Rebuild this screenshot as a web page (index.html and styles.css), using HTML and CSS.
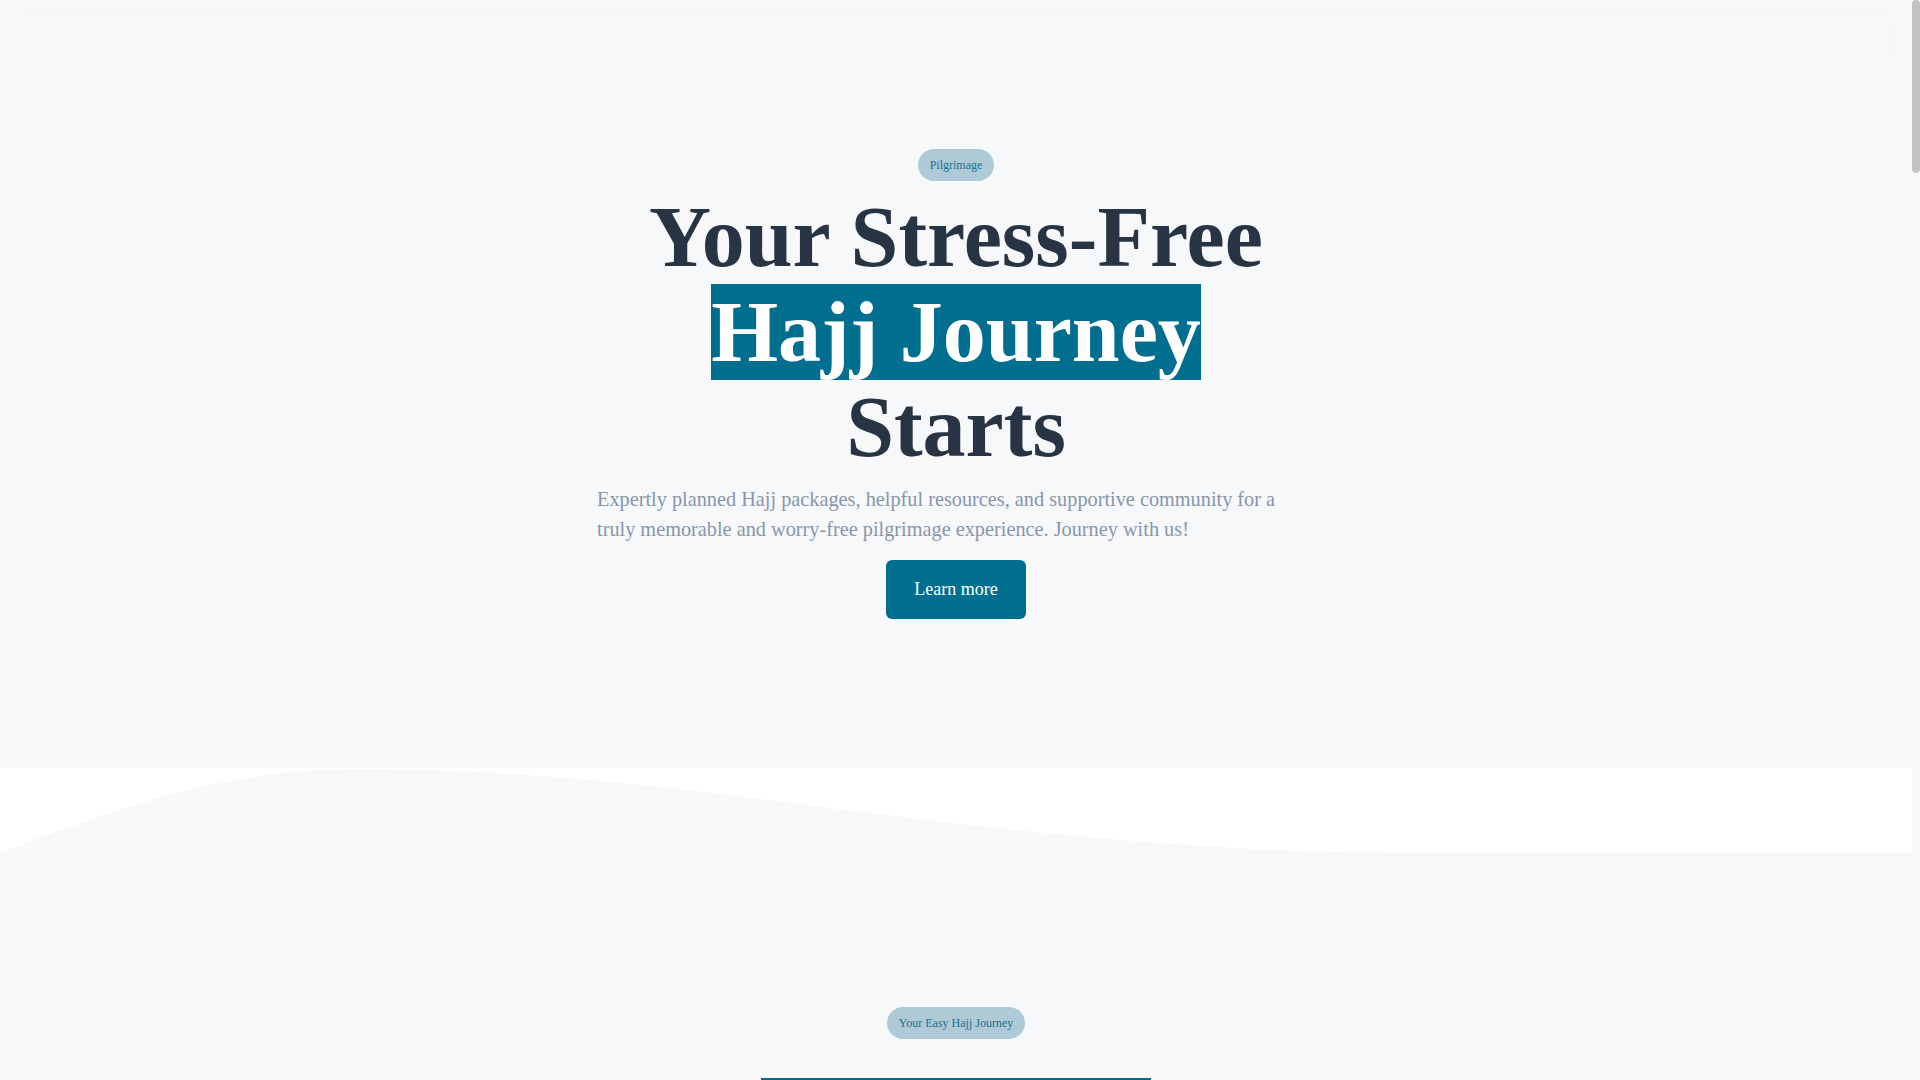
FILE: index.html
```html
<!DOCTYPE html>
<html lang="en">
<head>
<meta charset="utf-8">
<title>Hajj Journey</title>
<link rel="stylesheet" href="styles.css">
</head>
<body>
<div class="top">
  <header class="nav-wrap">
    <nav class="nav"></nav>
  </header>
  <section class="hero">
    <span class="badge">Pilgrimage</span>
    <h1 class="hero-title">Your Stress-Free<br><span class="hl">Hajj Journey</span><br>Starts</h1>
    <p class="hero-text">Expertly planned Hajj packages, helpful resources, and supportive community for a truly memorable and worry-free pilgrimage experience. Journey with us!</p>
    <a class="btn" href="#journey">Learn more</a>
  </section>
</div>
<div class="wave">
  <svg class="wave-svg" viewBox="0 0 1920 95" preserveAspectRatio="none" aria-hidden="true">
    <path d="M0,85 C110,43 220,1 360,1 C600,1 780,37 1020,62 C1190,79 1300,85 1420,85 L1920,85 L1920,95 L0,95 Z" fill="#f7f8fa"/>
  </svg>
</div>
<section class="journey" id="journey">
  <span class="badge">Your Easy Hajj Journey</span>
  <h2 class="section-title"><span class="hl hl-sm">Easy Steps to Hajj</span></h2>
</section>
<div class="scrollbar" aria-hidden="true"><div class="scrollbar-thumb"></div></div>
</body>
</html>
```

FILE: styles.css
```css
html, body {
  margin: 0;
  padding: 0;
}
html {
  background: #f7f8fa;
}
body {
  padding-right: 8px;
  font-family: "Liberation Serif", "Times New Roman", serif;
  color: #283343;
  background: #f7f8fa;
}

/* overlay scrollbar, as drawn by the browser in the reference */
.scrollbar {
  position: fixed;
  top: 0;
  right: 0;
  width: 8px;
  height: 100vh;
  background: #f8f9fa;
}
.scrollbar-thumb {
  height: 173px;
  border-radius: 4px;
  background: #c3c3c3;
}

.top {
  background: #f7f8fa;
}
.nav-wrap {
  padding: 15px 20px 0 18px;
}
.nav {
  height: 48px;
  border-radius: 4px;
  background: rgba(255, 255, 255, 0.12);
  box-shadow: 0 0 8px rgba(30, 40, 60, 0.015);
}

.hero {
  display: flex;
  flex-direction: column;
  align-items: center;
  padding: 86px 0 149px;
}
.badge {
  display: inline-block;
  padding: 8px 12px;
  font-size: 12px;
  line-height: 16px;
  color: #1b6f8f;
  background: #aecad7;
  border-radius: 16px;
}
.hero-title {
  margin: 9px 0 0;
  font-size: 86px;
  line-height: 95px;
  font-weight: 700;
  text-align: center;
  color: #283343;
}
.hl {
  background: #006e8f;
  color: #ffffff;
}
.hero-text {
  width: 718px;
  margin: 9px 0 0;
  font-size: 20.3px;
  line-height: 30px;
  color: #8796ac;
  text-align: left;
}
.btn {
  display: inline-block;
  margin-top: 16px;
  padding: 16px 28px;
  font-size: 18px;
  line-height: 27px;
  color: #ffffff;
  background: #006e8f;
  border-radius: 6px;
  text-decoration: none;
}

.wave {
  background: #ffffff;
}
.wave-svg {
  display: block;
  width: 100%;
  height: 95px;
}

.journey {
  display: flex;
  flex-direction: column;
  align-items: center;
  padding-top: 144px;
  min-height: 5733px;
  background: #f7f8fa;
}
.section-title {
  margin: 39px 0 0;
  font-size: 48px;
  line-height: 53px;
  font-weight: 700;
}
.hl-sm {
  padding: 0 6px;
  background: #0b6783;
}
```
